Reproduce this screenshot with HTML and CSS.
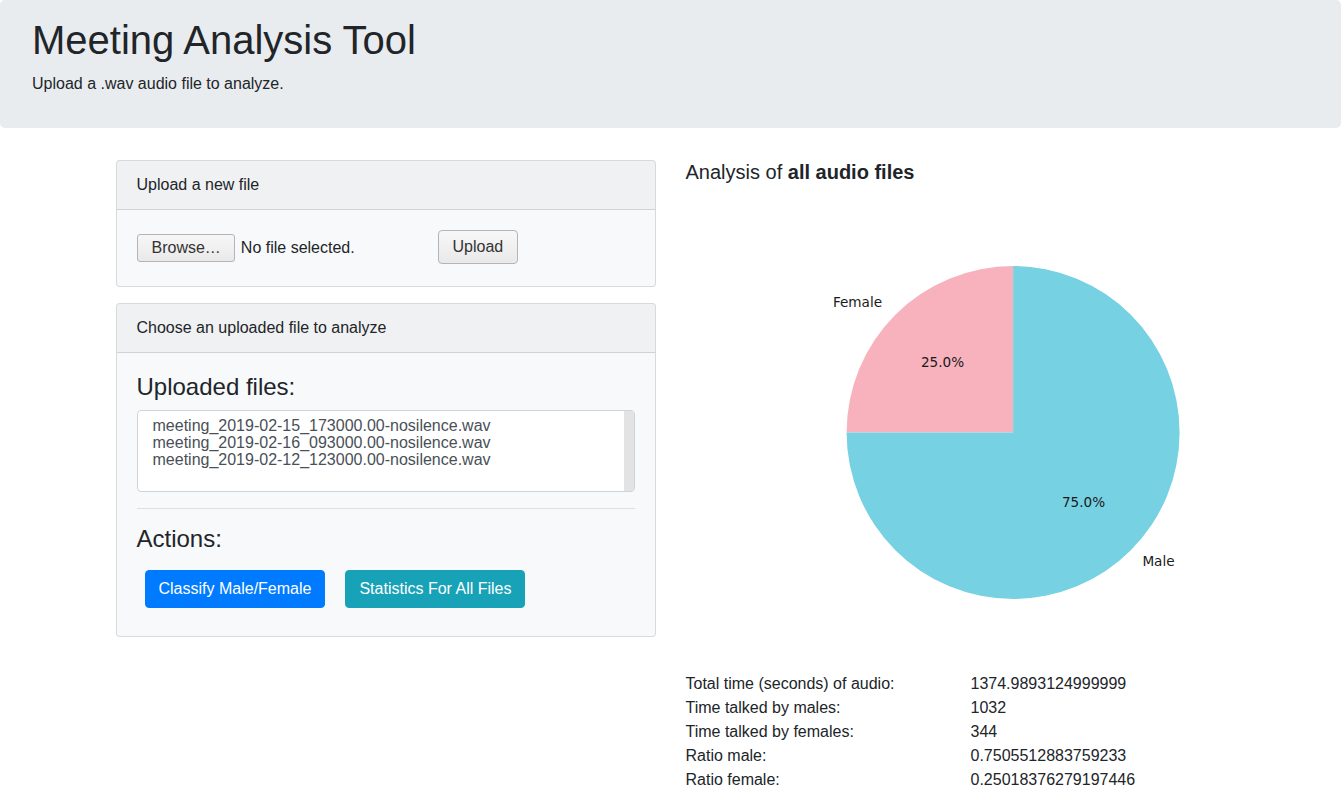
FILE: index.html
```html
<!DOCTYPE html>
<html>
<head>
<meta charset="utf-8">
<title>Meeting Analysis Tool</title>
<link rel="stylesheet" href="styles.css">
</head>
<body>
<div class="jumbotron">
  <h1 class="title">Meeting Analysis Tool</h1>
  <p class="lead">Upload a .wav audio file to analyze.</p>
</div>
<div class="container">
  <div class="row">
    <div class="col">
      <div class="card">
        <div class="card-header">Upload a new file</div>
        <div class="card-body upload-body">
          <div class="file-input">
            <span class="browse-btn">Browse…</span>
            <span class="file-label">No file selected.</span>
          </div>
          <button class="upload-btn">Upload</button>
        </div>
      </div>
      <div class="card">
        <div class="card-header">Choose an uploaded file to analyze</div>
        <div class="card-body">
          <h4 class="heading">Uploaded files:</h4>
          <div class="file-list">
            <div class="options">
              <div class="option">meeting_2019-02-15_173000.00-nosilence.wav</div>
              <div class="option">meeting_2019-02-16_093000.00-nosilence.wav</div>
              <div class="option">meeting_2019-02-12_123000.00-nosilence.wav</div>
            </div>
            <div class="scroll-track"></div>
          </div>
          <hr class="divider">
          <h4 class="heading">Actions:</h4>
          <div class="actions">
            <button class="btn btn-primary">Classify Male/Female</button>
            <button class="btn btn-info">Statistics For All Files</button>
          </div>
        </div>
      </div>
    </div>
    <div class="col">
      <h5 class="analysis-title">Analysis of <b>all audio files</b></h5>
      <svg class="pie" width="540" height="480" viewBox="0 0 540 480">
        <path d="M327.1 240.5 L327.1 74 A166.5 166.5 0 0 0 160.6 240.5 Z" fill="#f7b2bd"/>
        <path d="M327.1 240.5 L160.6 240.5 A166.5 166.5 0 1 0 327.1 74 Z" fill="#76d2e3"/>
        <g class="pie-text">
          <text x="171.5" y="115" text-anchor="middle">Female</text>
          <text x="256.5" y="175" text-anchor="middle">25.0%</text>
          <text x="397.5" y="315" text-anchor="middle">75.0%</text>
          <text x="472.5" y="374" text-anchor="middle">Male</text>
        </g>
      </svg>
      <table class="stats">
        <tr><td class="label">Total time (seconds) of audio:</td><td>1374.9893124999999</td></tr>
        <tr><td class="label">Time talked by males:</td><td>1032</td></tr>
        <tr><td class="label">Time talked by females:</td><td>344</td></tr>
        <tr><td class="label">Ratio male:</td><td>0.7505512883759233</td></tr>
        <tr><td class="label">Ratio female:</td><td>0.25018376279197446</td></tr>
      </table>
    </div>
  </div>
</div>
</body>
</html>
```
FILE: styles.css
```css
* { box-sizing: border-box; }
body {
  margin: 0;
  font-family: "Liberation Sans", Arial, sans-serif;
  font-size: 16px;
  line-height: 1.5;
  color: #212529;
  background: #fff;
}
.jumbotron {
  background: #e9ecef;
  padding: 16px 32px 32px;
  border-radius: 4.8px;
  margin-bottom: 32px;
}
.title {
  margin: 0 0 8px;
  font-size: 40px;
  font-weight: 400;
  line-height: 48px;
}
.lead {
  margin: 0;
  font-size: 16px;
  line-height: 24px;
}
.container {
  width: 1140px;
  margin: 0 auto;
  padding: 0 15px;
}
.row {
  display: flex;
  margin: 0 -15px;
}
.col {
  flex: 0 0 50%;
  padding: 0 15px;
}
.card {
  border: 1px solid rgba(0,0,0,.125);
  border-radius: 4px;
  background: #f8f9fa;
  margin-bottom: 16px;
  overflow: hidden;
}
.card-header {
  padding: 12px 20px;
  background: rgba(0,0,0,.03);
  border-bottom: 1px solid rgba(0,0,0,.125);
  line-height: 24px;
}
.card-body {
  padding: 20px;
}
.upload-body {
  display: flex;
  align-items: center;
  height: 76px;
}
.file-input {
  display: flex;
  align-items: center;
  width: 301px;
}
.browse-btn {
  display: inline-block;
  height: 28px;
  line-height: 26px;
  padding: 0 13px 0 14px;
  border: 1px solid #b5b5b5;
  border-radius: 3px;
  background: linear-gradient(#f7f7f7, #e9e9e9);
  color: #333;
  font-size: 16px;
}
.file-label {
  margin-left: 6px;
  color: #212529;
}
.upload-btn {
  height: 34px;
  padding: 0 14px;
  border: 1px solid #b5b5b5;
  border-radius: 4px;
  background: linear-gradient(#f7f7f7, #e9e9e9);
  color: #333;
  font-family: "Liberation Sans", Arial, sans-serif;
  font-size: 16px;
  margin-top: -2px;
}
.heading {
  margin: 0 0 8px;
  font-size: 24px;
  font-weight: 400;
  line-height: 28.8px;
}
.file-list {
  display: flex;
  height: 82px;
  border: 1px solid #ced4da;
  border-radius: 4px;
  background: #fff;
  overflow: hidden;
}
.options {
  flex: 1;
  padding: 6px 12px 6px 15px;
  color: #495057;
  line-height: 17px;
}
.scroll-track {
  width: 10px;
  background: #e3e3e3;
}
.divider {
  margin: 16px 0;
  border: 0;
  border-top: 1px solid rgba(0,0,0,.1);
}
.actions {
  display: flex;
  gap: 20px;
  padding: 8px;
}
.btn {
  height: 38px;
  padding: 6px 13px;
  border: 1px solid transparent;
  border-radius: 4px;
  color: #fff;
  font-family: "Liberation Sans", Arial, sans-serif;
  font-size: 16px;
  line-height: 24px;
}
.btn-primary { background: #007bff; border-color: #007bff; }
.btn-info { background: #17a2b8; border-color: #17a2b8; }
.analysis-title {
  margin: 0 0 8px;
  font-size: 20px;
  font-weight: 400;
  line-height: 24px;
}
.analysis-title b { font-weight: 700; }
.pie { display: block; }
.pie-text {
  font-family: "DejaVu Sans", sans-serif;
  font-size: 13.6px;
  fill: #1a1a1a;
}
.stats {
  border-collapse: collapse;
}
.stats td {
  padding: 0;
  line-height: 24px;
}
.stats td.label { width: 285px; }
```
